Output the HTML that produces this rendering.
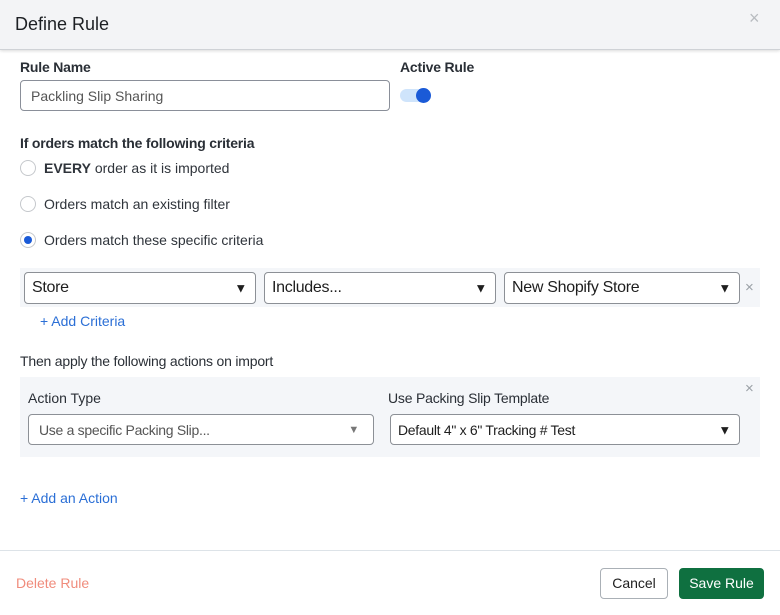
<!DOCTYPE html>
<html><head><style>
*{box-sizing:border-box;margin:0;padding:0}
body{width:780px;height:615px;background:#fff;font-family:"Liberation Sans",sans-serif;color:#222;position:relative;overflow:hidden}
.a{position:absolute;white-space:nowrap}
.hdr{left:0;top:0;width:780px;height:50px;background:#f3f4f6;border-bottom:1px solid #cfd2d6;box-shadow:0 1px 3px rgba(0,0,0,.15)}
.lbl{font-size:14px;font-weight:bold;color:#2a2f36;letter-spacing:-0.2px}
.sel{background:#fff;border:1px solid #8c9096;border-radius:4px;font-size:16px;color:#1e1e1e;padding-left:7px;display:flex;align-items:center;letter-spacing:-0.3px}
.car{position:absolute;right:8px;top:50%;transform:translateY(-50%);font-size:13px}
.radio{width:16px;height:16px;border:1px solid #c5c8cc;border-radius:50%;background:#fff}
.rt{font-size:14px;color:#2f343b}
.blue{color:#2b6fd6;font-size:14px}
.x{color:#9aa0a6;font-size:15px}
</style></head><body>
<div class="a hdr"></div>
<div class="a" style="left:15px;top:14px;font-size:18px;color:#1d2024">Define Rule</div>
<div class="a" style="left:749px;top:8px;font-size:18px;color:#b8bcc0">×</div>

<div class="a lbl" style="left:20px;top:59px">Rule Name</div>
<div class="a" style="left:20px;top:80px;width:370px;height:31px;border:1px solid #8a8f99;border-radius:4px;font-size:14px;color:#555;padding:7px 0 0 10px">Packling Slip Sharing</div>
<div class="a lbl" style="left:400px;top:59px">Active Rule</div>
<div class="a" style="left:400px;top:89px;width:30px;height:13px;border-radius:7px;background:#cfe4fb"></div>
<div class="a" style="left:416px;top:88px;width:15px;height:15px;border-radius:50%;background:#1a5ad7"></div>

<div class="a lbl" style="left:20px;top:135px">If orders match the following criteria</div>
<div class="a radio" style="left:20px;top:160px"></div>
<div class="a rt" style="left:44px;top:160px"><b>EVERY</b> order as it is imported</div>
<div class="a radio" style="left:20px;top:196px"></div>
<div class="a rt" style="left:44px;top:196px">Orders match an existing filter</div>
<div class="a radio" style="left:20px;top:232px"></div>
<div class="a" style="left:24px;top:236px;width:8px;height:8px;border-radius:50%;background:#1a5ad7"></div>
<div class="a rt" style="left:44px;top:232px">Orders match these specific criteria</div>

<div class="a" style="left:20px;top:268px;width:740px;height:39px;background:#f4f6f9"></div>
<div class="a sel" style="left:24px;top:272px;width:232px;height:32px">Store<span class="car">▼</span></div>
<div class="a sel" style="left:264px;top:272px;width:232px;height:32px">Includes...<span class="car">▼</span></div>
<div class="a sel" style="left:504px;top:272px;width:236px;height:32px">New Shopify Store<span class="car">▼</span></div>
<div class="a x" style="left:745px;top:279px">×</div>
<div class="a blue" style="left:40px;top:313px">+ Add Criteria</div>

<div class="a" style="left:20px;top:353px;font-size:14px;color:#2a2f36;letter-spacing:-0.2px">Then apply the following actions on import</div>
<div class="a" style="left:20px;top:377px;width:740px;height:80px;background:#f4f6f9"></div>
<div class="a" style="left:28px;top:390px;font-size:14px;color:#2a2f36">Action Type</div>
<div class="a" style="left:388px;top:390px;font-size:14px;color:#2a2f36;letter-spacing:-0.2px">Use Packing Slip Template</div>
<div class="a x" style="left:745px;top:380px">×</div>
<div class="a sel" style="left:28px;top:414px;width:346px;height:31px;font-size:14px;color:#555;padding-left:10px">Use a specific Packing Slip...<span class="car" style="color:#777;right:14px;font-size:11px">▼</span></div>
<div class="a sel" style="left:390px;top:414px;width:350px;height:31px;font-size:14px">Default 4" x 6" Tracking # Test<span class="car">▼</span></div>

<div class="a blue" style="left:20px;top:490px">+ Add an Action</div>

<div class="a" style="left:0;top:550px;width:780px;height:1px;background:#dde3e8"></div>
<div class="a" style="left:16px;top:575px;font-size:14px;color:#f08c7c">Delete Rule</div>
<div class="a" style="left:600px;top:568px;width:68px;height:31px;border:1px solid #aab0b6;border-radius:4px;font-size:14px;color:#1e1e1e;text-align:center;line-height:29px">Cancel</div>
<div class="a" style="left:679px;top:568px;width:85px;height:31px;background:#0f7040;border-radius:4px;font-size:14px;color:#fff;text-align:center;line-height:31px">Save Rule</div>
</body></html>
